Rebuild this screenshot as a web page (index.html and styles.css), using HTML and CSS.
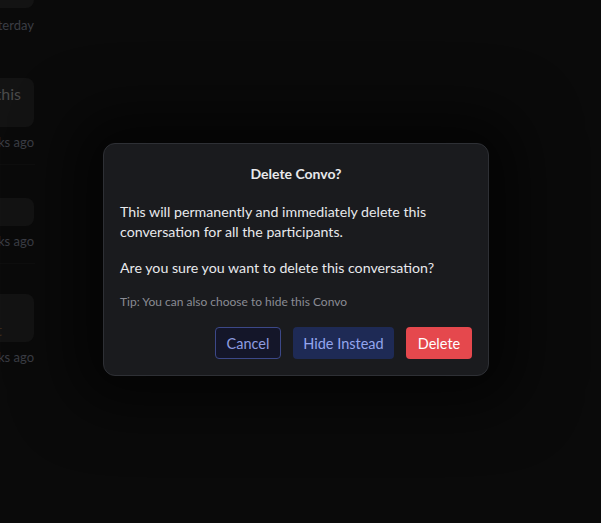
FILE: index.html
```html
<!DOCTYPE html>
<html>
<head>
<meta charset="utf-8">
<link rel="stylesheet" href="styles.css">
</head>
<body>
<div class="page">
  <div class="list">
    <div class="item first">
      <div class="bubble b0"></div>
      <div class="time">Yesterday</div>
    </div>
    <div class="item i1">
      <div class="bubble b1"><span class="msg">about this</span></div>
      <div class="time">2 weeks ago</div>
    </div>
    <div class="sep"></div>
    <div class="item i2">
      <div class="bubble b2"></div>
      <div class="time">3 weeks ago</div>
    </div>
    <div class="sep"></div>
    <div class="item i3">
      <div class="bubble b3"><span class="msg accent">it</span></div>
      <div class="time">5 weeks ago</div>
    </div>
  </div>
  <div class="overlay">
    <div class="dialog">
      <h2 class="title">Delete Convo?</h2>
      <p class="body">This will permanently and immediately delete this conversation for all the participants.</p>
      <p class="body">Are you sure you want to delete this conversation?</p>
      <p class="tip">Tip: You can also choose to hide this Convo</p>
      <div class="actions">
        <button class="btn btn-cancel">Cancel</button>
        <button class="btn btn-hide">Hide Instead</button>
        <button class="btn btn-delete">Delete</button>
      </div>
    </div>
  </div>
</div>
</body>
</html>
```
FILE: styles.css
```css
html, body {
  margin: 0;
  padding: 0;
  background: #0a0a0a;
  width: 601px;
  height: 523px;
  overflow: hidden;
  font-family: "Lato", "Noto Sans", sans-serif;
}
.page {
  position: relative;
  width: 601px;
  height: 523px;
}
.list {
  width: 200px;
  margin-left: -165px;
  display: flex;
  flex-direction: column;
}
.item {
  display: flex;
  flex-direction: column;
  align-items: flex-end;
  padding-right: 1px;
}
.bubble {
  width: 180px;
  background: #131313;
  border-radius: 8px;
  display: flex;
  align-items: center;
  justify-content: flex-end;
}
.b0 { height: 22px; margin-top: -14px; }
.b1 { height: 49px; }
.b2 { height: 28px; }
.b3 { height: 48px; }
.msg {
  color: #4a4a4a;
  font-size: 16px;
  white-space: nowrap;
}
.b1 .msg { margin-right: 13px; margin-top: -19px; }
.b3 .msg { margin-top: 22px; margin-right: 32px; }
.accent { color: #3a2a1a; }
.time {
  color: #3b3d44;
  font-size: 13px;
  margin-top: 7px;
  line-height: 16px;
  white-space: nowrap;
}
.item.first .time { margin-top: 9px; }
.item.i1 { margin-top: 45px; }
.sep {
  height: 1px;
  background: #0e0e0e;
  margin: 14px 0 0;
}
.item.i2 { margin-top: 33px; }
.item.i3 { margin-top: 30px; }

.overlay {
  position: absolute;
  left: 0;
  top: 0;
  width: 601px;
  height: 523px;
}
.dialog {
  position: absolute;
  left: 103px;
  top: 143px;
  width: 352px;
  padding: 20px 16px 16px 16px;
  background: #1a1b1e;
  border: 1px solid #2e3035;
  border-radius: 12px;
  box-shadow: 0 0 60px 30px rgba(0,0,0,0.6);
  color: #e8e9ec;
}
.title {
  margin: 0 0 18px;
  text-align: center;
  font-size: 14px;
  font-weight: 700;
  line-height: 20px;
}
.body {
  margin: 0 0 16px;
  font-size: 14.2px;
  line-height: 20px;
}
.tip {
  margin: 0 0 17px;
  font-size: 12px;
  line-height: 16px;
  color: #8a8c94;
}
.actions {
  display: flex;
  justify-content: flex-end;
  gap: 12px;
}
.btn {
  font-family: inherit;
  font-size: 14.5px;
  height: 32px;
  padding: 0;
  border-radius: 4px;
  border: 1px solid transparent;
  cursor: pointer;
}
.btn-cancel {
  background: #141629;
  border-color: #3c4888;
  color: #8e9ce0;
  width: 66px;
}
.btn-hide {
  background: #1e2a55;
  color: #94a6ef;
  width: 101px;
}
.btn-delete {
  background: #e5484d;
  color: #ffffff;
  width: 66px;
}
```
